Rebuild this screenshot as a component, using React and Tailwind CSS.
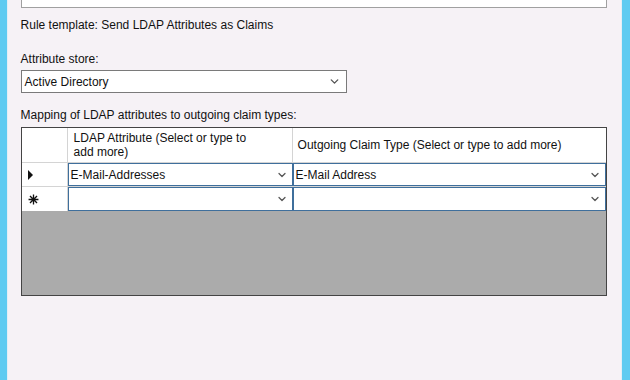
import { ChevronDown } from 'lucide-react'

function Combo({ value, className = '' }) {
    return (
        <div
            className={`flex h-full items-center justify-between border border-[#3f6f9c] bg-white pl-[2px] pr-[4px] ${className}`}
        >
            <span>{value}</span>
            <ChevronDown size={12} strokeWidth={2.5} className="text-[#555]" />
        </div>
    )
}

export default function App() {
    return (
        <div
            className="flex h-[380px] w-[630px] overflow-hidden bg-[#f6f2f6] text-[12px] text-[#111]"
            style={{ fontFamily: '"Liberation Sans", Arial, sans-serif' }}
        >
            <div className="w-[7px] bg-[#5fcbf1]" />
            <div className="flex flex-1 flex-col border-l border-[#e4eef6] pl-[13px] pr-[14px]">
                <div className="h-[8px] w-[586px] border border-t-0 border-[#a0a0a0] bg-white" />
                <p className="mt-[10px] leading-[14px]">
                    Rule template: Send LDAP Attributes as Claims
                </p>
                <p className="mt-[20px] leading-[14px]">Attribute store:</p>
                <div className="mt-[4px] flex h-[23px] w-[326px] items-center justify-between border border-[#7a7a7a] bg-white pl-[3px] pr-[5px]">
                    <span>Active Directory</span>
                    <ChevronDown size={13} strokeWidth={2.5} className="text-[#555]" />
                </div>
                <p className="mt-[15px] leading-[14px]">
                    Mapping of LDAP attributes to outgoing claim types:
                </p>
                <div className="mt-[5px] flex h-[169px] w-[586px] flex-col border border-[#444] bg-[#ababab]">
                    <div className="flex h-[35px] border-b border-[#d4d4d4] bg-white">
                        <div className="w-[46px] border-r border-[#d4d4d4]" />
                        <div className="flex w-[225px] items-center border-r border-[#d4d4d4] pl-[6px] leading-[14px]">
                            <span>
                                LDAP Attribute (Select or type to
                                <br />
                                add more)
                            </span>
                        </div>
                        <div className="flex flex-1 items-center pl-[5px]">
                            Outgoing Claim Type (Select or type to add more)
                        </div>
                    </div>
                    <div className="flex h-[24px] border-b border-[#d4d4d4] bg-white">
                        <div className="flex w-[46px] items-center border-r border-[#d4d4d4] pl-[6px]">
                            <svg width="6" height="10" viewBox="0 0 6 10">
                                <path d="M0 0 L5 5 L0 10 Z" fill="#111" />
                            </svg>
                        </div>
                        <div className="w-[225px]">
                            <Combo value="E-Mail-Addresses" />
                        </div>
                        <div className="flex-1">
                            <Combo value="E-Mail Address" />
                        </div>
                    </div>
                    <div className="flex h-[24px] bg-white">
                        <div className="flex w-[46px] items-center border-r border-[#d4d4d4] pl-[6px]">
                            <svg width="11" height="11" viewBox="0 0 10 10" stroke="#111" strokeWidth="1.2">
                                <path d="M5 0.5 V9.5 M0.5 5 H9.5 M1.8 1.8 L8.2 8.2 M8.2 1.8 L1.8 8.2" />
                            </svg>
                        </div>
                        <div className="w-[225px]">
                            <Combo value="" />
                        </div>
                        <div className="flex-1">
                            <Combo value="" />
                        </div>
                    </div>
                    <div className="flex-1" />
                </div>
            </div>
            <div className="w-[10px] border-l border-[#e4eef6] bg-[#5fcbf1]" />
        </div>
    )
}
